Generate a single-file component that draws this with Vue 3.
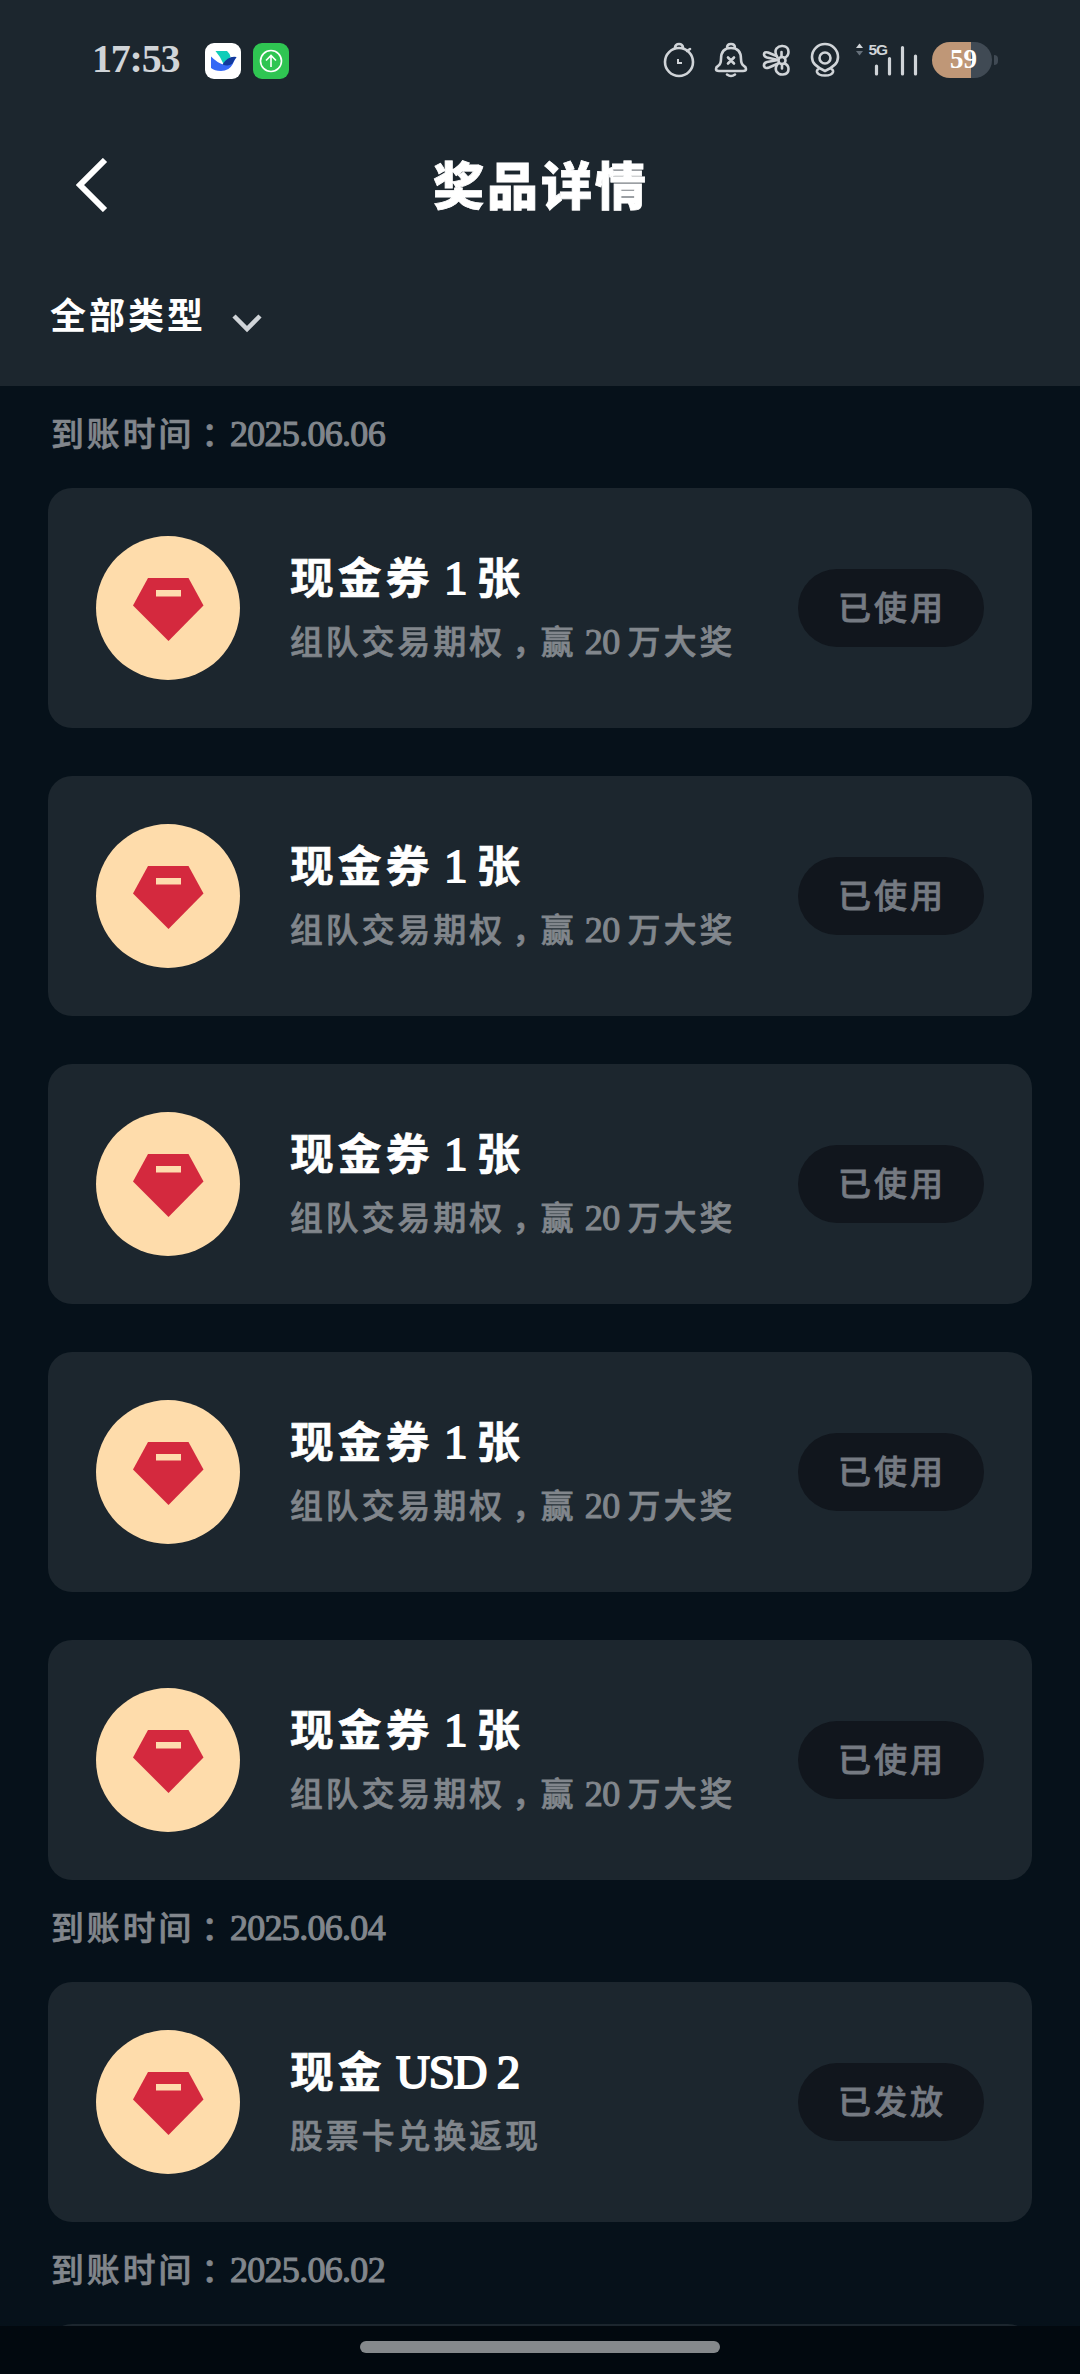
<script setup>
const voucher = { title: '现金券 1 张', desc: '组队交易期权，赢 20 万大奖', status: '已使用' }
const groups = [
  { date: '2025.06.06', items: Array.from({ length: 5 }, () => voucher) },
  { date: '2025.06.04', items: [{ title: '现金 USD 2', desc: '股票卡兑换返现', status: '已发放' }] },
  { date: '2025.06.02', items: [null] },
]

// Splits a string into Chinese, punctuation and Latin runs, each with its own face.
function runs(text) {
  return (text.match(/[\u4e00-\u9fff]+|[，：]|[^\u4e00-\u9fff，：]+/g) || []).map((t) => ({
    t,
    kind: /[\u4e00-\u9fff]/.test(t) ? 'han' : /[，：]/.test(t) ? 'han punct' : 'latin',
  }))
}
</script>

<template>
  <div class="screen">
    <header class="top">
      <div class="status">
        <span class="clock">17:53</span>
        <svg class="app-icon" viewBox="0 0 36 36">
          <rect width="36" height="36" rx="9" fill="#fff" />
          <path d="M10.500 8H22Q24.500 10 25.500 14L18.500 21Q15 13 10.500 8Z" fill="#10cdb9" />
          <path d="M6 13.500Q12 19.500 18 21.500Q23 13 31.500 14Q29 18 27.500 21.500Q24 28 16 28Q9.500 28 6 25Z" fill="#3568f5" />
          <path d="M17.500 21.500Q23 12.500 31.500 14Q29 17 27.500 20.500Q23.500 24 17.500 21.500Z" fill="#123a9b" />
        </svg>
        <svg class="app-icon second" viewBox="0 0 36 36">
          <rect width="36" height="36" rx="9" fill="#2fc552" />
          <g fill="none" stroke="#fff" stroke-width="1.600">
            <circle cx="18" cy="18" r="10.500" />
            <path d="M18 24V12.500M13 17.500L18 12.500L23 17.500" />
          </g>
        </svg>
        <svg class="system" viewBox="660 40 260 40" fill="none" stroke="#d0d4d8" stroke-width="2.600" stroke-linecap="round" stroke-linejoin="round">
          <circle cx="679" cy="62" r="14" />
          <path d="M675 47.500Q675.500 44 679 44T683 47.500M687 51L690 49" />
          <path d="M678 59V63H682" stroke-linecap="butt" stroke-linejoin="miter" stroke-width="2" />
          <path d="M727 48Q727 44 731 44T735 48M721 59Q721 48 731 48T741 59Q741 64 744 66Q746 67 746 69Q746 71 743 71H719Q716 71 716 69Q716 67 718 66Q721 64 721 59ZM727 74.500Q731 77.500 735 74.500M728 57.500L734 63.500M734 57.500L728 63.500" />
          <g>
            <circle cx="782" cy="60.500" r="3.500" />
            <path d="M777.500 57.500Q774 52 776.500 48.500Q779 45.500 783 46Q788.500 46.500 788.500 52Q788.500 56 784.500 58M781.500 52V57M778 63.500Q774.500 68 776.500 71.500Q779 75 783 74.500Q788.500 74 788.500 69Q788.500 65 784.500 63.500M782 64V68.500" />
            <path d="M776.500 56L768 52.500Q764 51.500 764 54.500Q764 56.500 767 57.500L778 60L767 62Q763.500 63 764 66Q765 69 769 67.500L777 64" />
          </g>
          <path d="M825 71Q819 68.500 815 64.500Q812 61.500 812 57A13 13 0 0 1 838 57Q838 61.500 835 64.500Q831 68.500 825 71ZM819 68.500Q816.500 70 817 72Q818 75.500 825 75.500T833 72Q833.500 70 831 68.500" />
          <circle cx="825" cy="58" r="5.500" />
          <path d="M859.500 43.500L863 48H856Z" fill="#d0d4d8" stroke="none" />
          <path d="M859.500 55.500L863 51H856Z" fill="#66707a" stroke="none" />
          <text x="868.500" y="55" class="net" fill="#d0d4d8" stroke="none">5G</text>
          <path d="M876.500 66V74M889.500 58.500V74M902.500 47.500V74M915.500 56V74" stroke-width="3.200" />
        </svg>
        <div class="battery"><span>59</span></div>
        <i class="battery-tip"></i>
      </div>

      <div class="nav">
        <svg class="back" viewBox="0 0 32 54"><path d="M29 2L4 27L29 52" /></svg>
        <h1>奖品详情</h1>
      </div>

      <div class="filter">
        <span>全部类型</span>
        <svg viewBox="0 0 30 20"><path d="M2 3L15 16L28 3" /></svg>
      </div>
    </header>

    <main class="list">
      <section v-for="g in groups" :key="g.date">
        <h2 class="date"><span v-for="(r, i) in runs('到账时间：' + g.date)" :key="i" :class="r.kind">{{ r.t }}</span></h2>
        <div class="cards">
          <article v-for="(item, n) in g.items" :key="n" class="card">
            <template v-if="item">
              <div class="badge">
                <svg viewBox="0 0 72 64">
                  <path d="M16 0H56.500L71.500 27.500L36.500 63L1 27.500Z" fill="#d4293e" />
                  <rect x="24" y="12" width="25" height="6.500" fill="#fedcae" />
                </svg>
              </div>
              <div class="info">
                <div class="title"><span v-for="(r, i) in runs(item.title)" :key="i" :class="r.kind">{{ r.t }}</span></div>
                <div class="desc"><span v-for="(r, i) in runs(item.desc)" :key="i" :class="r.kind">{{ r.t }}</span></div>
              </div>
              <div class="pill">{{ item.status }}</div>
            </template>
          </article>
        </div>
      </section>
    </main>

    <footer class="home"><i></i></footer>
  </div>
</template>

<style>
body {
  margin: 0;
  background: #06111a;
}
</style>

<style scoped>
.screen {
  display: flex;
  flex-direction: column;
  width: 1080px;
  height: 2374px;
  overflow: hidden;
  background: #06111a;
  color: #fff;
  font-family: "Liberation Serif", "Noto Sans CJK SC", serif;
}
.top {
  flex: none;
  height: 386px;
  background: #1c262e;
}
.status {
  display: flex;
  align-items: center;
  height: 120px;
  padding-left: 92px;
  box-sizing: border-box;
}
.clock {
  width: 113px;
  font-size: 40px;
  font-weight: 700;
  line-height: 44px;
  letter-spacing: -1.2px;
  color: #d0d4d8;
  margin-top: -3px;
}
.app-icon {
  width: 36px;
  height: 36px;
  margin-top: 2px;
}
.second {
  margin-left: 12px;
}
.system {
  width: 260px;
  height: 40px;
  margin-left: 371px;
}
.net {
  font: 700 15.5px "Liberation Sans", sans-serif;
  letter-spacing: -1px;
}
.battery {
  width: 60px;
  height: 36px;
  margin-left: 12px;
  border-radius: 18px;
  background: linear-gradient(90deg, #bf9777 39px, #404a54 39px);
  font-size: 27px;
  font-weight: 700;
  line-height: 35px;
  text-align: center;
}
.battery span {
  margin-left: 3px;
}
.battery-tip {
  width: 4px;
  height: 10px;
  margin-left: 2px;
  border-radius: 0 4px 4px 0;
  background: #404a54;
}
.nav {
  display: grid;
  grid-template-columns: 1fr auto 1fr;
  align-items: center;
  height: 130px;
  padding: 0 76px;
}
.back {
  width: 32px;
  height: 54px;
  fill: none;
  stroke: #fff;
  stroke-width: 6;
}
h1 {
  margin: -5px 0 0;
  font: 900 51px/60px "Noto Sans CJK SC", sans-serif;
  letter-spacing: 3px;
  text-indent: 2px;
  -webkit-text-stroke: 0.8px currentColor;
}
.filter {
  display: flex;
  align-items: center;
  gap: 26px;
  height: 130px;
  padding-left: 50px;
}
.filter span {
  margin-top: -4px;
  font: 700 36px/50px "Noto Sans CJK SC", sans-serif;
  letter-spacing: 3px;
}
.filter svg {
  width: 30px;
  height: 20px;
  margin-top: 16px;
  fill: none;
  stroke: #d0d4d8;
  stroke-width: 4.5;
}
.list {
  flex: 1;
  min-height: 0;
  overflow: hidden;
}
.han {
  font-family: "Noto Sans CJK SC", sans-serif;
  font-size: 0.91em;
  line-height: 0;
  letter-spacing: 0.095em;
}
.punct {
  margin: 0 9px 0 7px;
  font-feature-settings: "halt";
}
.latin {
  line-height: 0;
  white-space: pre;
}
.date {
  height: 102px;
  margin: 0;
  padding-left: 51px;
  font-size: 36px;
  font-weight: 500;
  line-height: 97px;
  color: #81868c;
}
.date .han,
.desc .han {
  -webkit-text-stroke: 0.7px currentColor;
}
.date .latin,
.desc .latin {
  -webkit-text-stroke: 1.1px currentColor;
  letter-spacing: -0.7px;
}
.cards {
  display: flex;
  flex-direction: column;
  gap: 48px;
  padding: 0 48px;
}
.card {
  display: flex;
  align-items: center;
  height: 240px;
  padding: 0 48px;
  box-sizing: border-box;
  border-radius: 24px;
  background: #1c262e;
}
.badge {
  display: flex;
  justify-content: center;
  width: 144px;
  height: 144px;
  padding-top: 42px;
  box-sizing: border-box;
  border-radius: 50%;
  background: #fedcab;
}
.badge svg {
  width: 72px;
  height: 64px;
}
.info {
  flex: 1;
  margin: 3px 0 0 50px;
  white-space: nowrap;
}
.title {
  font-size: 48px;
  font-weight: 700;
  line-height: 64px;
}
.title .han {
  -webkit-text-stroke: 0.6px currentColor;
}
.title .latin {
  font-size: 47px;
  font-weight: 400;
  letter-spacing: -1.3px;
  -webkit-text-stroke: 1.8px currentColor;
}
.desc {
  font-size: 36px;
  font-weight: 500;
  line-height: 64px;
  color: #81868c;
}
.pill {
  width: 186px;
  height: 78px;
  border-radius: 39px;
  background: #11161d;
  color: #757a82;
  font: 500 33px/74px "Noto Sans CJK SC", sans-serif;
  letter-spacing: 3px;
  text-indent: 2px;
  text-align: center;
  -webkit-text-stroke: 0.7px currentColor;
}
.home {
  display: flex;
  flex: none;
  justify-content: center;
  height: 48px;
  background: #02090f;
}
.home i {
  width: 360px;
  height: 12px;
  margin-top: 15px;
  border-radius: 6px;
  background: #85898c;
}
</style>
